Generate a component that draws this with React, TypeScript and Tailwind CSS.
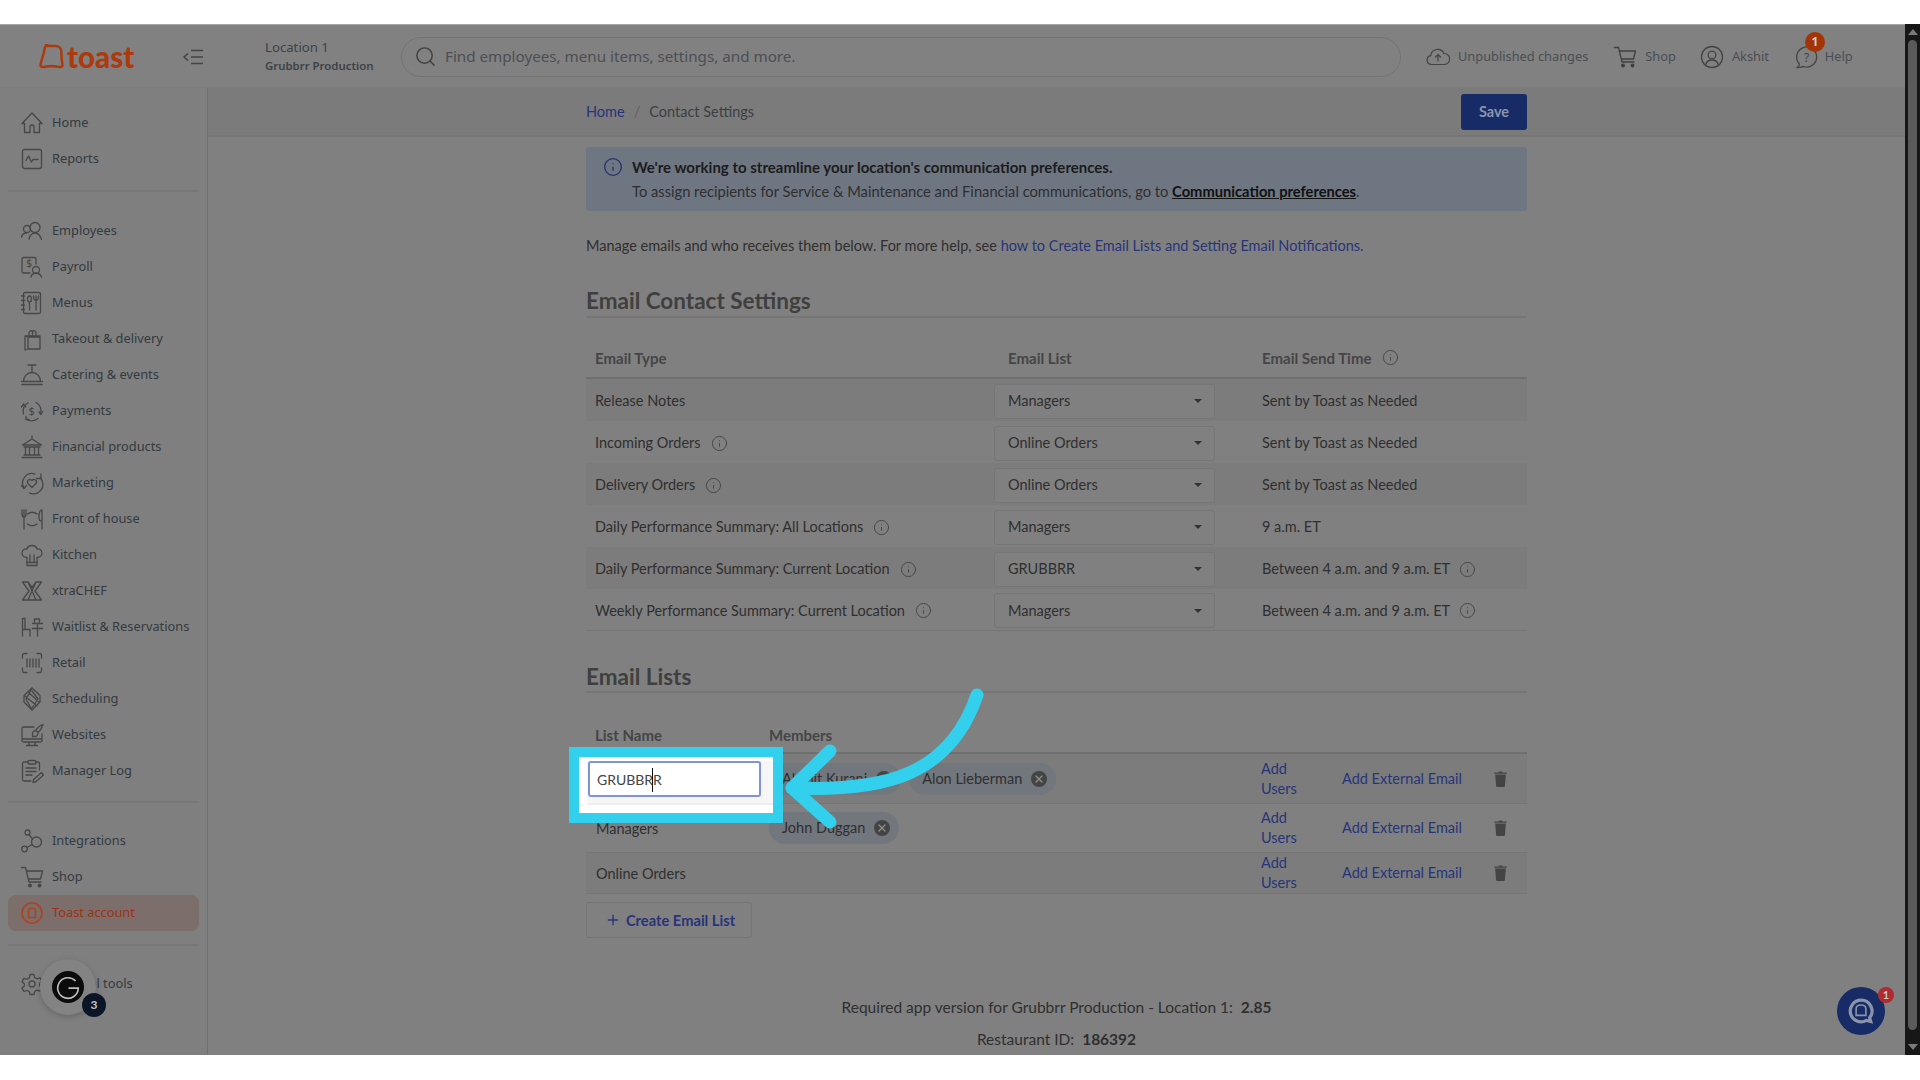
import { Info, Plus, Search, X } from "lucide-react";
import type { ReactNode } from "react";

const sans = "font-['Noto_Sans',sans-serif]";

const Ico = ({ children, className = "" }: { children: ReactNode; className?: string }) => (
  <svg
    viewBox="0 0 24 24"
    fill="none"
    stroke="currentColor"
    strokeWidth="1.3"
    strokeLinecap="round"
    strokeLinejoin="round"
    className={`size-[24px] shrink-0 ${className}`}
  >
    {children}
  </svg>
);

const icons: Record<string, ReactNode> = {
  home: <path d="M12 2 2 12.5h2.5v9H10V16a2 2 0 0 1 4 0v5.500h5.500v-9H22L12 2Z" />,
  reports: (
    <>
      <rect x="2.500" y="2.500" width="19" height="19" rx="2" />
      <path d="M6 13.500 8.500 9l3 6 1.500-2.500h5" />
    </>
  ),
  employees: (
    <>
      <circle cx="7" cy="10" r="3.500" />
      <circle cx="15" cy="8.500" r="5" />
      <path d="M1.500 18c.5-2.500 2.500-4 5-4M9 20c.8-3.500 3-6 6-6s5.200 2.500 6.500 6.500" />
    </>
  ),
  payroll: (
    <>
      <path d="M10 18H3.500A1.500 1.500 0 0 1 2 16.500V4a1.500 1.500 0 0 1 1.500-1.500h11A1.500 1.500 0 0 1 16 4v5" />
      <text x="6" y="12" fontSize="11" stroke="none" fill="currentColor">$</text>
      <circle cx="16" cy="15" r="3.500" />
      <path d="M11 22c.6-2.500 2.500-4 5-4s4.400 1.500 5.500 4" />
    </>
  ),
  menus: (
    <>
      <rect x="3.500" y="1.500" width="17" height="21" rx="1.500" />
      <path d="M1.500 5h3M1.500 9.500h3M1.500 14h3M1.500 18.500h3M9.500 12v7M16 5v14M13.500 5c0 3 1 4.500 2.500 4.500s2.500-1.500 2.500-4.500" />
      <ellipse cx="9.500" cy="8" rx="2" ry="3" />
    </>
  ),
  takeout: (
    <>
      <path d="M5 9h15v13H8l-3 1V9ZM5 9l3 1v12M8 10h12" />
      <path d="M9 9V6a2 2 0 0 1 3.500-1.500A2 2 0 0 1 16 6v3M12.500 4.500V9" />
    </>
  ),
  catering: (
    <path d="M2 21.500h20M3.500 18.500c0-5 3.500-9 8.500-9s8.500 4 8.500 9h-17ZM1.500 18.500h21M8 2h8M12 2v7.500" />
  ),
  payments: (
    <>
      <path d="M3.500 15A9.500 9.500 0 0 1 8 3.800M16 3.500a9.500 9.500 0 0 1 4.800 11M18 19.500a9.500 9.500 0 0 1-12 .5" />
      <path d="M1.500 8 3.700 5l2 3M19 13l1.800 2.500 2-3M6 17.500V20.500h3" />
      <text x="8.500" y="16" fontSize="11" stroke="none" fill="currentColor">$</text>
    </>
  ),
  financial: (
    <path d="M12 1v3M2.500 10 12 4l9.500 6h-19ZM4 12h16M5.500 12v8M9.500 12v8M14.500 12v8M18.500 12v8M4 20h16M2 22.500h20" />
  ),
  marketing: (
    <>
      <path d="M4 17A9.500 9.500 0 0 1 15 3M20.500 7a9.500 9.500 0 0 1-11 15" />
      <path d="M1.500 14.500 4 17.500l2.500-3M21 3v4.500h-4.500" />
      <path d="M12 16.500l-4-4a2.500 2.500 0 0 1 4-3 2.500 2.500 0 0 1 4 3l-4 4Z" />
    </>
  ),
  front: (
    <>
      <path d="M2 3v4c0 2 1 3 2 3s2-1 2-3V3M4 3v19M22 3c-2 0-3 3-3 7s1 4 3 4V3ZM22 14v8" />
      <path d="M7.500 7a8 8 0 0 1 9.500 0M17 17a8 8 0 0 1-9.500 0" strokeWidth="1.500" />
    </>
  ),
  kitchen: (
    <>
      <path d="M7 14.500c-3 0-5-2-5-4.500 0-2.800 2.500-4.500 5-4 .6-2.200 2.700-3.500 5-3.500s4.400 1.300 5 3.500c2.500-.5 5 1.200 5 4 0 2.500-2 4.500-5 4.500v8H7v-8Z" />
      <path d="M10 12v7M14 12v7M7 19.500h10" />
    </>
  ),
  xtra: <path d="M2.500 3h5.500l4 5.500L16 3h5.500l-6.500 9 6.500 9H2.500L9 12 2.500 3ZM8 3l8 18M16 3 8 21" />,
  waitlist: (
    <>
      <path d="M2.500 21V3.500h2.500v11h5v6.500M2.500 14.500h2.500" />
      <path d="M12.500 8.500h10M17.500 8.500V21M12.500 13.500h10M14.500 8.500V4h5v4.500" />
    </>
  ),
  retail: (
    <path d="M2.500 7V4A1.500 1.500 0 0 1 4 2.500h3M17 2.500h3A1.500 1.500 0 0 1 21.500 4v3M2.500 17v3A1.500 1.500 0 0 0 4 21.500h3M17 21.500h3a1.500 1.500 0 0 0 1.500-1.500v-3M7 8v8M10 8v8M13 8v8M16 8v8M19 8v8" />
  ),
  scheduling: (
    <>
      <path d="M12 1 20 8.500 20 15 12 23 4 15 4 8.500 12 1Z" />
      <path d="M12 1 6 12l6 11M12 4l6 8-6 9M5 9l12 10M8 5l11 10" />
    </>
  ),
  websites: (
    <>
      <path d="M14 4H3.500A1.500 1.500 0 0 0 2 5.500v12A1.500 1.500 0 0 0 3.500 19h17a1.500 1.500 0 0 0 1.500-1.500V11M2 16h20M9 19v3M15 19v3M6.500 22.500h11" />
      <path d="M23 1.500c-3 1-6 3.500-7.500 6l2.500 2c2.500-2 4-5 5-8ZM15.500 7.500c-1.500 0-3 1.500-3 3.500v2.500l2 0c2 0 3.500-1.500 3.500-3.500" />
    </>
  ),
  log: (
    <>
      <path d="M8 3H4a1.500 1.500 0 0 0-1.500 1.500v16A1.500 1.500 0 0 0 4 22h7M16 3h2a1.500 1.500 0 0 1 1.500 1.500V11" />
      <rect x="8" y="1.500" width="8" height="3.500" rx="1" />
      <path d="M6 9h10M6 12.500h10M6 16h6M14 23l-1 .5.500-3 8-7 2 2.500-8 7Z" />
    </>
  ),
  integrations: (
    <>
      <circle cx="7.500" cy="3.500" r="2.500" />
      <circle cx="16.500" cy="13" r="5" />
      <circle cx="4.500" cy="20" r="2.800" />
      <path d="M9 5.500l3.500 4.500M12 15.500l-5 3" />
    </>
  ),
  cart: (
    <>
      <path d="M1.500 2.500h4l3.500 14.500h12M6.500 6h16l-2 8H8.500" />
      <circle cx="10" cy="20.500" r="1.300" fill="currentColor" />
      <circle cx="19.500" cy="20.500" r="1.300" fill="currentColor" />
    </>
  ),
  account: (
    <>
      <circle cx="12" cy="12" r="10" strokeWidth="1.600" />
      <path d="M8.500 16.500V10c0-2 1.500-3 3.500-3s3.500 1 3.500 3v6.500h-7Z" strokeWidth="1.600" />
    </>
  ),
  gear: (
    <>
      <circle cx="12" cy="12" r="3" />
      <path d="M10 2.500h4l.6 3 2.400 1.400 3-1 2 3.400-2.300 2v2.400l2.300 2-2 3.400-3-1-2.400 1.400-.6 3h-4l-.6-3L7 18.500l-3 1-2-3.400 2.300-2v-2.400L2 9.700l2-3.400 3 1 2.400-1.400.6-3Z" />
    </>
  ),
};

const Item = ({ icon, label, active }: { icon: string; label: string; active?: boolean }) => (
  <div
    className={`mx-[8px] flex h-[36px] items-center gap-[8px] rounded-[8px] px-[12px] text-[12.8px] whitespace-nowrap ${active ? "bg-[#7c6e6a] text-[#9c3216]" : "text-[#333a40]"}`}
  >
    <Ico className={active ? "text-[#ad4220]" : "text-[#474747]"}>{icons[icon]}</Ico>
    <span>{label}</span>
  </div>
);

const Divider = ({ className = "" }: { className?: string }) => (
  <div className={`mx-[8px] h-[2px] bg-[#777777] ${className}`} />
);

const Sidebar = () => (
  <aside className={`flex w-[208px] shrink-0 flex-col border-r border-[#717171] bg-[#7f7f7f] ${sans}`}>
    <div className="pt-[17px]">
      <Item icon="home" label="Home" />
      <Item icon="reports" label="Reports" />
    </div>
    <Divider className="mt-[13px]" />
    <div className="mt-[21px]">
      <Item icon="employees" label="Employees" />
      <Item icon="payroll" label="Payroll" />
      <Item icon="menus" label="Menus" />
      <Item icon="takeout" label="Takeout & delivery" />
      <Item icon="catering" label="Catering & events" />
      <Item icon="payments" label="Payments" />
      <Item icon="financial" label="Financial products" />
      <Item icon="marketing" label="Marketing" />
      <Item icon="front" label="Front of house" />
      <Item icon="kitchen" label="Kitchen" />
      <Item icon="xtra" label="xtraCHEF" />
      <Item icon="waitlist" label="Waitlist & Reservations" />
      <Item icon="retail" label="Retail" />
      <Item icon="scheduling" label="Scheduling" />
      <Item icon="websites" label="Websites" />
      <Item icon="log" label="Manager Log" />
    </div>
    <Divider className="mt-[12px]" />
    <div className="mt-[20px]">
      <Item icon="integrations" label="Integrations" />
      <Item icon="cart" label="Shop" />
      <Item icon="account" label="Toast account" active />
    </div>
    <Divider className="mt-[13px]" />
    <div className="mt-[20px]">
      <Item icon="gear" label="Internal tools" />
    </div>
  </aside>
);

const TopBar = () => (
  <header className={`flex h-[64px] shrink-0 items-center border-t border-[#a8a8a8] border-b border-b-[#7a7a7a] bg-[#818181] pt-[1px] text-[#3e4246] ${sans}`}>
    <div className="flex w-[265px] shrink-0 items-center pl-[39px]">
      <svg viewBox="0 0 24 24" fill="none" stroke="#ad3a0c" strokeWidth="2.400" strokeLinejoin="round" className="size-[25px] shrink-0">
        <path d="M7 2h9c3.500 0 5.500 2.500 5.500 6 0 1.500.5 9 1 12 .2 1.200-.5 2-1.500 2-3 0-6-1-9-1s-6 1-9 1c-1 0-1.700-.8-1.500-2 .5-3 2-8 3-11 .6-2 1-9 3.500-9Z" />
      </svg>
      <span className="ml-[3px] font-['Lato',sans-serif] text-[29.500px] leading-none font-black text-[#ad3a0c]">toast</span>
      <svg viewBox="0 0 24 24" fill="none" stroke="#444444" strokeWidth="1.600" className="ml-[47px] size-[24px] shrink-0">
        <path d="M7 8.500 3 12l4 3.500M10 5.500h12M10 12h12M10 18.500h12" />
      </svg>
    </div>
    <div className="w-[136px] shrink-0 leading-none">
      <div className="text-[13.2px]">Location 1</div>
      <div className="mt-[6px] text-[11.4px] font-semibold">Grubbrr Production</div>
    </div>
    <div className="flex h-[40px] w-[1000px] shrink-0 items-center gap-[8px] rounded-full border border-[#747474] pl-[12px] text-[15.2px] text-[#4b4f53]">
      <Search size={23} strokeWidth={1.5} className="text-[#414141]" />
      <span>Find employees, menu items, settings, and more.</span>
    </div>
    <div className="ml-[25px] flex items-center text-[12.8px] text-[#4a4e52]">
      <svg viewBox="0 0 24 24" fill="none" stroke="#444444" strokeWidth="1.200" strokeLinecap="round" className="size-[24px]">
        <path d="M7 19.500H5.500a4.500 4.500 0 0 1-.8-8.900A7 7 0 0 1 18 8.500a5.500 5.500 0 0 1 .5 11H7ZM12 16v-6M9.500 12 12 9.500l2.500 2.500" />
      </svg>
      <span className="ml-[8px]">Unpublished changes</span>
      <Ico className="ml-[25px] text-[#3f3f3f]">{icons.cart}</Ico>
      <span className="ml-[8px]">Shop</span>
      <svg viewBox="0 0 24 24" fill="none" stroke="#444444" strokeWidth="1.300" className="ml-[24px] size-[24px]">
        <circle cx="12" cy="12" r="10.500" />
        <circle cx="12" cy="10" r="3.800" />
        <path d="M5.500 20c1-3.500 3.500-5 6.500-5s5.500 1.500 6.500 5" />
      </svg>
      <span className="ml-[8px]">Akshit</span>
      <div className="relative ml-[26px] size-[24px]">
        <svg viewBox="0 0 24 24" fill="none" stroke="#444444" strokeWidth="1.300" strokeLinejoin="round" className="size-[24px]">
          <path d="M2 22.500c1.500-1 2.500-2 2.500-3.500a10 10 0 1 1 4 2.500c-2 .5-4.500 1.500-6.500 1Z" />
          <text x="9" y="17" fontSize="12" stroke="none" fill="#444444">?</text>
        </svg>
        <div className="absolute -top-[13px] left-[10px] flex size-[20px] items-center justify-center rounded-full bg-[#a33408] text-[12px] font-bold text-[#c9c9c9]">
          1
        </div>
      </div>
      <span className="ml-[6px]">Help</span>
    </div>
  </header>
);

const main = "font-['Lato',sans-serif]";

const emailRows = [
  { type: "Release Notes", info: false, list: "Managers", time: "Sent by Toast as Needed", timeInfo: false },
  { type: "Incoming Orders", info: true, list: "Online Orders", time: "Sent by Toast as Needed", timeInfo: false },
  { type: "Delivery Orders", info: true, list: "Online Orders", time: "Sent by Toast as Needed", timeInfo: false },
  { type: "Daily Performance Summary: All Locations", info: true, list: "Managers", time: "9 a.m. ET", timeInfo: false },
  { type: "Daily Performance Summary: Current Location", info: true, list: "GRUBBRR", time: "Between 4 a.m. and 9 a.m. ET", timeInfo: true },
  { type: "Weekly Performance Summary: Current Location", info: true, list: "Managers", time: "Between 4 a.m. and 9 a.m. ET", timeInfo: true },
];

const Chip = ({ name }: { name: string }) => (
  <div className="flex h-[32px] items-center gap-[9px] rounded-full bg-[#72767d] pr-[9px] pl-[13px]">
    <span>{name}</span>
    <span className="flex size-[16px] items-center justify-center rounded-full bg-[#444444]">
      <X size={12} strokeWidth={2.500} className="text-[#8f8f8f]" />
    </span>
  </div>
);

const TrashIcon = () => (
  <svg viewBox="0 0 14 18" fill="#444444" className="h-[16px] w-[13px]">
    <path d="M1 4h12l-1 12.500c0 .8-.7 1.500-1.500 1.500h-7c-.8 0-1.500-.7-1.500-1.500L1 4ZM0 1.800h4.500L5.500.5h3l1 1.300H14V3H0V1.800Z" />
  </svg>
);

const ListRow = ({
  name,
  className,
  children,
}: {
  name: ReactNode;
  className: string;
  children?: ReactNode;
}) => (
  <div className={`flex items-center border-b border-[#757575] ${className}`}>
    <div className="w-[183px] shrink-0 pt-[2px] pl-[10px]">{name}</div>
    <div className="flex w-[492px] shrink-0 items-center gap-[8px]">{children}</div>
    <div className="w-[81px] shrink-0 leading-[20px] text-[#27347a]">
      Add
      <br />
      Users
    </div>
    <div className="w-[152px] shrink-0 text-[#27347a]">Add External Email</div>
    <TrashIcon />
  </div>
);

const Content = () => (
  <main className={`flex min-w-0 flex-1 flex-col overflow-hidden bg-[#808080] text-[14.5px] text-[#2f2f2f] ${main}`}>
    <div className="flex h-[49px] shrink-0 justify-center border-b-2 border-[#767676] bg-[#7b7b7b]">
      <div className="flex w-[941px] items-center justify-between">
        <div className="flex items-center gap-[9px] text-[#3b3f44]">
          <span className="text-[#27347a]">Home</span>
          <span className="text-[#606060]">/</span>
          <span>Contact Settings</span>
        </div>
        <div className="flex h-[36px] w-[66px] items-center justify-center rounded-[3px] bg-[#172b66] font-bold text-[#8a95ad]">
          Save
        </div>
      </div>
    </div>
    <div className="mx-auto w-[941px]">
      <div className="relative mt-[10px] flex h-[64px] rounded-[3px] bg-[#6e7682] pt-[8px] pl-[46px] text-[14.7px]">
        <Info size={20} strokeWidth={1.500} className="absolute top-[10px] left-[17px] text-[#23306e]" />
        <div className="leading-[24px]">
          <div className="text-[15px] font-bold text-[#1c1c1c]">We're working to streamline your location's communication preferences.</div>
          <div>
            To assign recipients for Service &amp; Maintenance and Financial communications, go to{" "}
            <span className="font-bold text-[#111111] underline">Communication preferences</span>.
          </div>
        </div>
      </div>
      <p className="mt-[25px] leading-[20px]">
        Manage emails and who receives them below. For more help, see{" "}
        <span className="text-[#27347a]">how to Create Email Lists and Setting Email Notifications.</span>
      </p>
      <h2 className="mt-[31px] h-[31px] border-b-2 border-[#767676] text-[22.500px] leading-[28px] font-bold text-[#3f3f3f]">
        Email Contact Settings
      </h2>
      <div className="flex h-[61px] items-end border-b-2 border-[#6f6f6f] pb-[8px] text-[15px] font-bold text-[#454545]">
        <div className="w-[422px] shrink-0 pl-[9px]">Email Type</div>
        <div className="w-[254px] shrink-0">Email List</div>
        <div className="flex items-center gap-[10px]">
          Email Send Time <Info size={17} strokeWidth={1.300} className="text-[#444444]" />
        </div>
      </div>
      {emailRows.map((row, i) => (
        <div key={row.type} className={`flex h-[42px] items-center pt-[2px] ${i % 2 === 0 ? "bg-[#7c7c7c]" : ""} ${i === 5 ? "border-b border-[#757575]" : ""}`}>
          <div className="flex w-[408px] shrink-0 items-center gap-[10px] pl-[9px]">
            {row.type}
            {row.info && <Info size={17} strokeWidth={1.300} className="text-[#444444]" />}
          </div>
          <div className="flex h-[35px] w-[221px] shrink-0 items-center justify-between rounded-[3px] border border-[#767676] bg-[#808080] pr-[12px] pl-[13px]">
            {row.list}
            <span className="h-0 w-0 border-x-[4px] border-t-[4px] border-x-transparent border-t-[#333333]" />
          </div>
          <div className="flex items-center gap-[9px] pl-[47px]">
            {row.time}
            {row.timeInfo && <Info size={17} strokeWidth={1.300} className="text-[#444444]" />}
          </div>
        </div>
      ))}
      <h2 className="mt-[32px] h-[30px] border-b-2 border-[#767676] text-[22.500px] leading-[28px] font-bold text-[#3f3f3f]">
        Email Lists
      </h2>
      <div className="flex h-[61px] items-end border-b-2 border-[#6f6f6f] pb-[6px] text-[15px] font-bold text-[#454545]">
        <div className="w-[183px] shrink-0 pl-[9px]">List Name</div>
        <div>Members</div>
      </div>
      <ListRow name="GRUBBRR" className="h-[50px] bg-[#7c7c7c]">
        <Chip name="Akshit Kurani" />
        <Chip name="Alon Lieberman" />
      </ListRow>
      <ListRow name="Managers" className="h-[49px]">
        <Chip name="John Duggan" />
      </ListRow>
      <ListRow name="Online Orders" className="h-[41px] bg-[#7c7c7c]" />
      <div className="mt-[8px] flex h-[36px] w-[166px] items-center justify-center gap-[5px] rounded-[3px] border border-[#747474] pl-[2px] text-[14.7px] font-bold text-[#27347a]">
        <Plus size={16} strokeWidth={2} />
        Create Email List
      </div>
      <p className="mt-[59px] text-center text-[15.5px] leading-[20px]">
        Required app version for Grubbrr Production - Location 1:&nbsp; <b>2.85</b>
      </p>
      <p className="mt-[12px] text-center text-[15.5px] leading-[20px]">
        Restaurant ID:&nbsp; <b>186392</b>
      </p>
    </div>
  </main>
);

const Scrollbar = () => (
  <div className="flex w-[15px] shrink-0 flex-col items-center bg-[#171717] py-[5px]">
    <span className="h-0 w-0 border-x-[5px] border-b-[6px] border-x-transparent border-b-[#7a7a7a]" />
    <div className="mt-[5px] w-[9px] flex-1 rounded-full bg-[#5a5a5a]" />
    <div className="mt-[14px] h-0 w-0 border-x-[5px] border-t-[6px] border-x-transparent border-t-[#7a7a7a]" />
  </div>
);

export default function App() {
  return (
    <div className="relative flex h-[1080px] w-[1920px] flex-col overflow-hidden bg-white">
      <div className="h-[24px] shrink-0" />
      <div className="flex h-[1031px] shrink-0">
        <div className="flex min-w-0 flex-1 flex-col">
          <TopBar />
          <div className="flex min-h-0 flex-1">
            <Sidebar />
            <Content />
          </div>
        </div>
        <Scrollbar />
      </div>

      {/* screenshot annotation: highlighted field */}
      <div className={`absolute top-[747px] left-[569px] h-[76px] w-[214px] border-[10px] border-[#33d0ee] bg-white ${main}`}>
        <div className="absolute top-[4px] left-[8px] h-[44px] w-[186px] border-b-2 border-[#eeeeee] bg-[#f6f6f6]" />
        <div className="absolute top-[4px] left-[9px] flex h-[36px] w-[173px] items-center rounded-[3px] border-2 border-[#8093d8] bg-white pl-[7px] text-[14px] text-[#444444]">
          GRUBBRR
          <span className="absolute top-[5px] left-[62px] h-[24px] w-px bg-[#111111]" />
        </div>
      </div>
      <svg viewBox="0 0 1920 1080" fill="none" stroke="#33d0ee" strokeWidth="13" strokeLinecap="round" strokeLinejoin="round" className="pointer-events-none absolute top-0 left-0 h-[1080px] w-[1920px]">
        <path d="M977 695C950 775 885 792 792 788" />
        <path d="M830 751 792 788 830 822" />
      </svg>

      {/* floating guide bubble */}
      <div className="absolute top-[959px] left-[40px] flex size-[56px] items-center justify-center rounded-full bg-[#838383] shadow-[0_2px_6px_rgba(0,0,0,0.2)]">
        <div className="flex size-[32px] items-center justify-center rounded-full bg-[#0b0b0b]">
          <svg viewBox="0 0 24 24" fill="none" stroke="#bdbdbd" strokeWidth="1.500" className="size-[26px]">
            <path d="M19 6.500A9.500 9.500 0 1 0 21.500 13H12.500" />
          </svg>
        </div>
      </div>
      <div className="absolute top-[993px] left-[82px] flex size-[24px] items-center justify-center rounded-full bg-[#0a1628] font-['Lato',sans-serif] text-[12px] font-bold text-[#c4c4c4]">
        3
      </div>

      {/* chat launcher */}
      <div className="absolute top-[987px] left-[1837px] flex size-[48px] items-center justify-center rounded-full bg-[#172b66]">
        <svg viewBox="0 0 24 24" className="size-[26px]" fill="none" stroke="#8a93a8" strokeWidth="3">
          <path d="M12 2a10 10 0 1 0 5 18.700l4 1-1-3.500A10 10 0 0 0 12 2Z" />
          <path d="M7.500 16V10c0-2.500 2-3.500 4.500-3.500s4.500 1 4.500 3.500v6h-9Z" strokeWidth="1.500" />
        </svg>
      </div>
      <div className="absolute top-[987px] left-[1878px] flex size-[16px] items-center justify-center rounded-full bg-[#b02a30] font-['Lato',sans-serif] text-[11px] font-bold text-[#c9c9c9]">
        1
      </div>
    </div>
  );
}
